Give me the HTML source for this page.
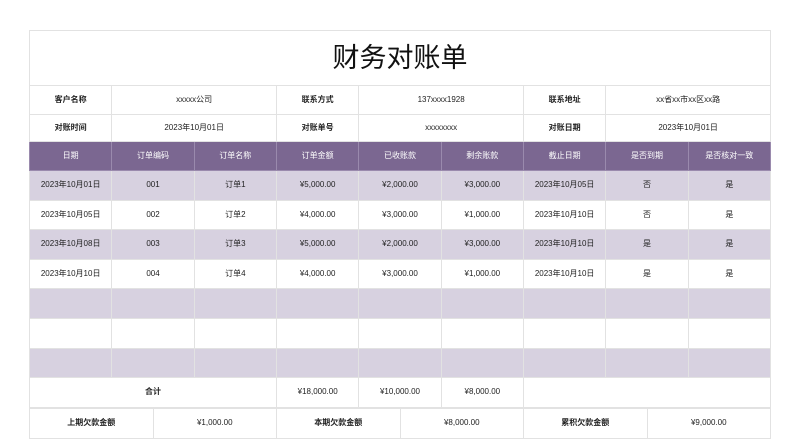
<!DOCTYPE html>
<html><head><meta charset="utf-8"><style>
body{margin:0;width:800px;height:447px;background:#fff;overflow:hidden;font-family:"Liberation Sans","Noto Sans CJK SC",sans-serif;}
table{position:absolute;left:29px;width:742px;border-collapse:collapse;table-layout:fixed;}
td{border:1px solid #e2e2e2;text-align:center;font-size:8px;color:#222;padding:0;white-space:nowrap;overflow:hidden;line-height:10px;}
.t td{height:54px;font-size:27px;line-height:30px;color:#111;}
.i1 td{height:28px;}
.i2 td{height:26px;}
.h td{background:#7b6791;color:#fff;height:28px;border-color:#9a8aad;}
.b td{background:#d7d1e0;}
.r td{height:28.6px;}
.l{font-weight:bold}
</style></head><body>
<table style="top:30px">
<colgroup><col><col><col><col><col><col><col><col><col></colgroup>
<tr class="t"><td colspan="9">财务对账单</td></tr>
<tr class="i1"><td class="l">客户名称</td><td colspan="2">xxxxx公司</td><td class="l">联系方式</td><td colspan="2">137xxxx1928</td><td class="l">联系地址</td><td colspan="2">xx省xx市xx区xx路</td></tr>
<tr class="i2"><td class="l">对账时间</td><td colspan="2">2023年10月01日</td><td class="l">对账单号</td><td colspan="2">xxxxxxxx</td><td class="l">对账日期</td><td colspan="2">2023年10月01日</td></tr>
<tr class="h"><td>日期</td><td>订单编码</td><td>订单名称</td><td>订单金额</td><td>已收账款</td><td>剩余账款</td><td>截止日期</td><td>是否到期</td><td>是否核对一致</td></tr>
<tr class="r b"><td>2023年10月01日</td><td>001</td><td>订单1</td><td>¥5,000.00</td><td>¥2,000.00</td><td>¥3,000.00</td><td>2023年10月05日</td><td>否</td><td>是</td></tr>
<tr class="r"><td>2023年10月05日</td><td>002</td><td>订单2</td><td>¥4,000.00</td><td>¥3,000.00</td><td>¥1,000.00</td><td>2023年10月10日</td><td>否</td><td>是</td></tr>
<tr class="r b"><td>2023年10月08日</td><td>003</td><td>订单3</td><td>¥5,000.00</td><td>¥2,000.00</td><td>¥3,000.00</td><td>2023年10月10日</td><td>是</td><td>是</td></tr>
<tr class="r"><td>2023年10月10日</td><td>004</td><td>订单4</td><td>¥4,000.00</td><td>¥3,000.00</td><td>¥1,000.00</td><td>2023年10月10日</td><td>是</td><td>是</td></tr>
<tr class="r b"><td></td><td></td><td></td><td></td><td></td><td></td><td></td><td></td><td></td></tr>
<tr class="r"><td></td><td></td><td></td><td></td><td></td><td></td><td></td><td></td><td></td></tr>
<tr class="r b"><td></td><td></td><td></td><td></td><td></td><td></td><td></td><td></td><td></td></tr>
<tr class="r"><td colspan="3" class="l">合计</td><td>¥18,000.00</td><td>¥10,000.00</td><td>¥8,000.00</td><td colspan="3"></td></tr>
</table>
<table style="top:408px">
<tr class="r"><td class="l">上期欠款金额</td><td>¥1,000.00</td><td class="l">本期欠款金额</td><td>¥8,000.00</td><td class="l">累积欠款金额</td><td>¥9,000.00</td></tr>
</table>
</body></html>
